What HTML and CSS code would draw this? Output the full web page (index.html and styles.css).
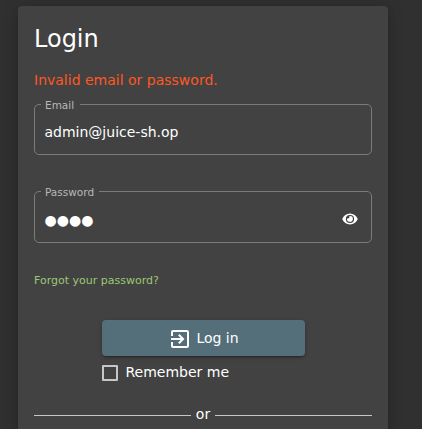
FILE: index.html
```html
<!DOCTYPE html>
<html lang="en">
<head>
<meta charset="utf-8">
<title>Login</title>
<link rel="stylesheet" href="styles.css">
</head>
<body>
<main class="card">
  <h1 class="title">Login</h1>
  <p class="error">Invalid email or password.</p>
  <fieldset class="field">
    <legend class="label label-email"><span>Email</span></legend>
    <div class="value">admin@juice-sh.op</div>
  </fieldset>
  <fieldset class="field field-password">
    <legend class="label label-password"><span>Password</span></legend>
    <div class="value dots">●●●●</div>
    <svg class="eye" viewBox="0 0 16 12" width="16" height="12">
      <path fill="#fff" fill-rule="evenodd" d="M8 .6C4.5.6 1.6 2.8.2 6c1.4 3.2 4.300 5.400 7.800 5.400s6.400-2.200 7.800-5.400C14.400 2.800 11.500.6 8 .6zM8 1.900a4.100 4.100 0 1 1 0 8.200a4.100 4.100 0 0 1 0-8.200z"/>
      <path fill="#fff" d="M8 3.100a2.900 2.900 0 1 1-2.800 2.150a1.500 1.500 0 0 0 2.050-2.050A2.900 2.900 0 0 1 8 3.100z"/>
    </svg>
  </fieldset>
  <a class="forgot">Forgot your password?</a>
  <div class="actions">
    <button class="login" type="button">
      <svg class="login-icon" viewBox="0 0 24 24" width="24" height="24">
        <path fill="#fff" d="M10.090 15.590L11.500 17l5-5-5-5-1.410 1.410L12.670 11H3v2h9.670l-2.580 2.590zM19 3H5c-1.110 0-2 .9-2 2v4h2V5h14v14H5v-4H3v4c0 1.100.89 2 2 2h14c1.100 0 2-.9 2-2V5c0-1.100-.9-2-2-2z"/>
      </svg>
      <span>Log in</span>
    </button>
    <label class="remember"><span class="box"></span><span>Remember me</span></label>
  </div>
  <div class="divider"><span>or</span></div>
</main>
</body>
</html>
```
FILE: styles.css
```css
* { box-sizing: border-box; }
html { height: 100%; overflow: hidden; }
body {
  height: 429px;
  margin: 0;
  padding: 6px 34px 0 18px;
  overflow: hidden;
  background: #303030;
  color: #fff;
  font-family: "DejaVu Sans", sans-serif;
  font-size: 14px;
}
.card {
  height: 423px;
  padding: 16px 16px 0;
  border-radius: 4px 4px 0 0;
  background: #424242;
  box-shadow: 0 3px 3px -2px rgba(0,0,0,.2), 0 6px 10px rgba(0,0,0,.14), 0 1px 18px rgba(0,0,0,.12);
}
.title { margin: 0; padding-top: 1px; font-size: 24px; font-weight: 400; line-height: 32px; }
.error { margin: 15px 0 0; color: #ff5722; line-height: 20px; }
.field {
  display: block;
  position: relative;
  min-width: 0;
  height: 51px;
  margin: 14px 0 0;
  padding: 0 10px;
  border: 1px solid #7b7b7b;
  border-radius: 5px;
}
.field-password { height: 52px; margin-top: 36px; }
.label {
  height: 1px;
  margin-left: -4px;
  padding: 0 0 0 4px;
  color: #b8b8b8;
  font-size: 10.5px;
  line-height: 1px;
}
.label span { position: relative; top: 1px; }
.label-email { width: 39px; }
.label-password { width: 58px; }
.value { margin-top: 17px; margin-left: -.5px; line-height: 20px; }
.dots { margin-top: 18px; }
.eye { position: absolute; right: 13px; top: 21px; }
.forgot {
  display: block;
  margin-top: 30px;
  color: #9dc775;
  font-size: 11px;
  line-height: 16px;
}
.actions { width: 203px; margin: 31px 0 0 68px; }
.login {
  display: flex;
  align-items: center;
  justify-content: center;
  gap: 4px;
  width: 100%;
  height: 36px;
  padding: 0;
  border: 0;
  border-radius: 4px;
  background: #546e7a;
  color: #fff;
  font: 14px/36px "DejaVu Sans", sans-serif;
  box-shadow: 0 3px 1px -2px rgba(0,0,0,.2), 0 2px 2px rgba(0,0,0,.14), 0 1px 5px rgba(0,0,0,.12);
}
.login-icon { margin-top: 2px; }
.remember { display: flex; align-items: center; gap: 7.5px; height: 20px; margin-top: 6px; }
.box { width: 16px; height: 16px; margin-top: 2px; border: 2px solid #c6c6c6; border-radius: 1px; }
.divider { display: flex; align-items: center; gap: 5px; height: 20px; margin-top: 22px; }
.divider::before, .divider::after { content: ""; flex: 1; height: 1px; margin-top: 2px; background: #c6c6c6; }
```
